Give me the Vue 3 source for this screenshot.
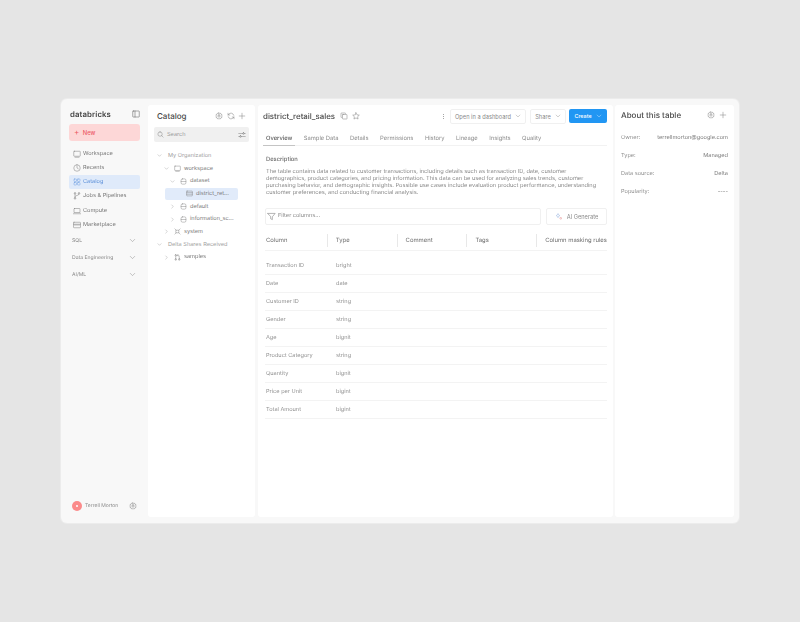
<script setup>
const nav = [
  { label: 'Workspace', icon: 'monitor' },
  { label: 'Recents', icon: 'clock' },
  { label: 'Catalog', icon: 'grid', active: true },
  { label: 'Jobs & Pipelines', icon: 'branch' },
  { label: 'Compute', icon: 'laptop' },
  { label: 'Marketplace', icon: 'store' }
]
const sections = ['SQL', 'Data Engineering', 'AI/ML']
const tree = [
  { label: 'My Organization', depth: 0, arrow: 'down', heading: true },
  { label: 'workspace', depth: 1, arrow: 'down', icon: 'monitor' },
  { label: 'dataset', depth: 2, arrow: 'down', icon: 'db' },
  { label: 'district_ret...', depth: 3, icon: 'table', selected: true },
  { label: 'default', depth: 2, arrow: 'right', icon: 'db' },
  { label: 'information_sc...', depth: 2, arrow: 'right', icon: 'db' },
  { label: 'system', depth: 1, arrow: 'right', icon: 'system' },
  { label: 'Delta Shares Received', depth: 0, arrow: 'down', heading: true },
  { label: 'samples', depth: 1, arrow: 'right', icon: 'share' }
]
const tabs = ['Overview', 'Sample Data', 'Details', 'Permissions', 'History', 'Lineage', 'Insights', 'Quality']
const heads = ['Column', 'Type', 'Comment', 'Tags', 'Column masking rules']
const rows = [
  ['Transaction ID', 'bright'], ['Date', 'date'], ['Customer ID', 'string'], ['Gender', 'string'],
  ['Age', 'bignit'], ['Product Category', 'string'], ['Quantity', 'bignit'], ['Price per Unit', 'bigint'], ['Total Amount', 'bigint']
]
const about = [
  ['Owner:', 'terrellmorton@google.com'], ['Type:', 'Managed'], ['Data source:', 'Delta'], ['Popularity:', '----']
]
const paths = {
  monitor: 'M2.500 2.500h11a1 1 0 0 1 1 1v8a1 1 0 0 1-1 1h-11a1 1 0 0 1-1-1v-8a1 1 0 0 1 1-1zM4 14.500h8',
  clock: 'M8 1.500a6.500 6.500 0 1 0 0 13a6.500 6.500 0 1 0 0-13zM8 4.500V8l2.500 1.500',
  grid: 'M3 2h3a1 1 0 0 1 1 1v3a1 1 0 0 1-1 1H3a1 1 0 0 1-1-1V3a1 1 0 0 1 1-1zM10 2h3a1 1 0 0 1 1 1v3a1 1 0 0 1-1 1h-3a1 1 0 0 1-1-1V3a1 1 0 0 1 1-1zM3 9h3a1 1 0 0 1 1 1v3a1 1 0 0 1-1 1H3a1 1 0 0 1-1-1v-3a1 1 0 0 1 1-1zM10 9h3a1 1 0 0 1 1 1v3a1 1 0 0 1-1 1h-3a1 1 0 0 1-1-1v-3a1 1 0 0 1 1-1z',
  branch: 'M4 4.500v7M4 9c0-3 8-1 8-4.500M4 1.500a1.500 1.500 0 1 0 0 3a1.500 1.500 0 1 0 0-3zM4 11.500a1.500 1.500 0 1 0 0 3a1.500 1.500 0 1 0 0-3zM12 1.500a1.500 1.500 0 1 0 0 3a1.500 1.500 0 1 0 0-3z',
  laptop: 'M3 3h10a1 1 0 0 1 1 1v7H2V4a1 1 0 0 1 1-1zM.800 13.500h14.400',
  store: 'M2 2.500h12a1 1 0 0 1 1 1v9a1 1 0 0 1-1 1H2a1 1 0 0 1-1-1v-9a1 1 0 0 1 1-1zM1 6.500h14M4 6.500V9M8 6.500V9M12 6.500V9',
  db: 'M5.500 2h5a3 3 0 0 1 3 3v6a3 3 0 0 1-3 3h-5a3 3 0 0 1-3-3V5a3 3 0 0 1 3-3zM2.500 8h11',
  table: 'M2.500 2.500h11a1 1 0 0 1 1 1v9a1 1 0 0 1-1 1h-11a1 1 0 0 1-1-1v-9a1 1 0 0 1 1-1zM1.500 6h13M1.500 9.700h13',
  system: 'M5 5h6v6H5zM5 5L2 2M11 5l3-3M5 11l-3 3M11 11l3 3',
  share: 'M4 5v6M12 11V5c0-1.500-1-2-2-2H7.500M9 1L7 3l2 2M4 1.500a1.700 1.700 0 1 0 0 3.400a1.700 1.700 0 1 0 0-3.400zM4 11a1.700 1.700 0 1 0 0 3.400a1.700 1.700 0 1 0 0-3.400zM12 11a1.700 1.700 0 1 0 0 3.400a1.700 1.700 0 1 0 0-3.400z',
  gear: 'M8 1.500l1.300 1.400 1.900-.300.700 1.800 1.800.700-.300 1.900L14.500 8l-1.100 1 .300 1.900-1.800.700-.700 1.800-1.900-.300L8 14.500l-1.300-1.400-1.900.300-.700-1.800-1.800-.700.300-1.900L1.500 8l1.100-1-.300-1.900 1.800-.700.700-1.800 1.900.300zM8 5.700a2.300 2.300 0 1 0 0 4.600a2.300 2.300 0 1 0 0-4.600z',
  sync: 'M13.500 6.500A5.700 5.700 0 0 0 3.500 4.500L2 6M2.500 9.500a5.700 5.700 0 0 0 10 2L14 10M2 2.500V6h3.500M14 13.500V10h-3.500',
  plus: 'M8 2.500v11M2.500 8h11',
  down: 'M3 5.500l5 5 5-5',
  right: 'M5.500 3l5 5-5 5',
  search: 'M7 2a5 5 0 1 0 0 10a5 5 0 1 0 0-10zM10.700 10.700L14 14',
  sliders: 'M1.500 5h8M12.500 5h2M1.500 11h2M6.500 11h8M11 3.300a1.700 1.700 0 1 0 0 3.400a1.700 1.700 0 1 0 0-3.400zM5 9.300a1.700 1.700 0 1 0 0 3.400a1.700 1.700 0 1 0 0-3.400z',
  panel: 'M2.500 2h11a1 1 0 0 1 1 1v10a1 1 0 0 1-1 1h-11a1 1 0 0 1-1-1V3a1 1 0 0 1 1-1zM6 2v12',
  copy: 'M6 5h7a1 1 0 0 1 1 1v7a1 1 0 0 1-1 1H6a1 1 0 0 1-1-1V6a1 1 0 0 1 1-1zM3 11H2.800A.800.800 0 0 1 2 10.200V3a1 1 0 0 1 1-1h7.200a.800.800 0 0 1 .800.800V3',
  star: 'M8 1.500l2 4.200 4.600.600-3.400 3.200.900 4.600L8 11.800l-4.100 2.300.900-4.600L1.400 6.300 6 5.700z',
  filter: 'M1.500 2.500h13L9.500 8.500v5l-3-1.500V8.500z'
}
</script>

<template>
  <div class="page">
    <div class="window">
      <aside class="sidebar">
        <div class="brand">
          <span class="logo">databricks</span>
          <svg class="ico ico-panel" viewBox="0 0 16 16"><path :d="paths.panel" /></svg>
        </div>
        <button class="new"><span class="new-plus">+</span> New</button>
        <nav class="nav">
          <div v-for="n in nav" :key="n.label" class="nav-item" :class="{ active: n.active }">
            <svg class="ico ico-nav" viewBox="0 0 16 16"><path :d="paths[n.icon]" /></svg>
            <span>{{ n.label }}</span>
          </div>
        </nav>
        <div class="sections">
          <div v-for="s in sections" :key="s" class="section">
            <span>{{ s }}</span>
            <svg class="ico ico-chev" viewBox="0 0 16 16"><path :d="paths.down" /></svg>
          </div>
        </div>
        <div class="user">
          <span class="avatar"><i></i></span>
          <span class="user-name">Terrell Morton</span>
          <svg class="ico ico-gear-user" viewBox="0 0 16 16"><path :d="paths.gear" /></svg>
        </div>
      </aside>

      <section class="panel catalog">
        <header class="cat-head">
          <h2 class="title">Catalog</h2>
          <div class="head-icons">
            <svg class="ico ico-head" viewBox="0 0 16 16"><path :d="paths.gear" /></svg>
            <svg class="ico ico-head" viewBox="0 0 16 16"><path :d="paths.sync" /></svg>
            <svg class="ico ico-head" viewBox="0 0 16 16"><path :d="paths.plus" /></svg>
          </div>
        </header>
        <div class="search">
          <svg class="ico ico-search" viewBox="0 0 16 16"><path :d="paths.search" /></svg>
          <span>Search</span>
          <svg class="ico ico-sliders" viewBox="0 0 16 16"><path :d="paths.sliders" /></svg>
        </div>
        <div class="tree">
          <div
            v-for="t in tree"
            :key="t.label"
            class="tree-row"
            :class="[`depth-${t.depth}`, { selected: t.selected, heading: t.heading }]"
          >
            <svg v-if="t.arrow" class="ico ico-arrow" viewBox="0 0 16 16"><path :d="paths[t.arrow]" /></svg>
            <svg v-if="t.icon" class="ico ico-tree" viewBox="0 0 16 16"><path :d="paths[t.icon]" /></svg>
            <span>{{ t.label }}</span>
          </div>
        </div>
      </section>

      <main class="panel main">
        <header class="main-head">
          <h1 class="title table-name">district_retail_sales</h1>
          <svg class="ico ico-title" viewBox="0 0 16 16"><path :d="paths.copy" /></svg>
          <svg class="ico ico-title" viewBox="0 0 16 16"><path :d="paths.star" /></svg>
          <span class="kebab"><i></i><i></i><i></i></span>
          <button class="btn btn-dash">Open in a dashboard
            <svg class="ico ico-btn" viewBox="0 0 16 16"><path :d="paths.down" /></svg>
          </button>
          <button class="btn btn-share">Share
            <svg class="ico ico-btn" viewBox="0 0 16 16"><path :d="paths.down" /></svg>
          </button>
          <button class="btn-create">Create
            <svg class="ico ico-btn" viewBox="0 0 16 16"><path :d="paths.down" /></svg>
          </button>
        </header>
        <div class="tabs">
          <span v-for="(t, i) in tabs" :key="t" class="tab" :class="{ on: i === 0 }">{{ t }}</span>
        </div>
        <div class="desc">
          <h3>Description</h3>
          <p>The table contains data related to customer transactions, including details such as transaction ID, date, customer demographics, product categories, and pricing information. This data can be used for analyzing sales trends, customer purchasing behavior, and demographic insights. Possible use cases include evaluation product performance, understanding customer preferences, and conducting financial analysis.</p>
        </div>
        <div class="filter-row">
          <div class="filter">
            <svg class="ico ico-filter" viewBox="0 0 16 16"><path :d="paths.filter" /></svg>
            <span>Filter columns...</span>
          </div>
          <button class="ai">
            <svg class="ai-ico" viewBox="0 0 16 16">
              <path d="M6 3l1.200 3L10 7.200 7.200 8.500 6 11.500 4.800 8.500 2 7.200 4.800 6z" />
              <path class="ai-b" d="M11.500 10l.700 1.800 1.800.700-1.800.700-.700 1.800-.700-1.800-1.800-.700 1.800-.700z" />
            </svg>
            AI Generate
          </button>
        </div>
        <div class="thead">
          <div v-for="h in heads" :key="h" class="th">{{ h }}</div>
        </div>
        <div class="tbody">
          <div v-for="r in rows" :key="r[0]" class="tr">
            <span class="td">{{ r[0] }}</span>
            <span class="td">{{ r[1] }}</span>
          </div>
        </div>
      </main>

      <section class="panel about">
        <header class="about-head">
          <h2 class="title">About this table</h2>
          <div class="head-icons">
            <svg class="ico ico-head" viewBox="0 0 16 16"><path :d="paths.gear" /></svg>
            <svg class="ico ico-head" viewBox="0 0 16 16"><path :d="paths.plus" /></svg>
          </div>
        </header>
        <dl class="facts">
          <div v-for="a in about" :key="a[0]" class="fact">
            <dt>{{ a[0] }}</dt>
            <dd>{{ a[1] }}</dd>
          </div>
        </dl>
      </section>
    </div>
  </div>
</template>

<style>
html, body { margin: 0; background: #e5e5e5; }
</style>

<style scoped>
.page {
  width: 800px;
  height: 622px;
  box-sizing: border-box;
  padding: 99px 61px;
  background: #e5e5e5;
  font-family: Inter, "Liberation Sans", sans-serif;
  color: #777;
  font-size: 5.600px;
  text-rendering: geometricPrecision;
  -webkit-font-smoothing: antialiased;
}
.window {
  display: flex;
  height: 424px;
  background: #f8f8f8;
  border-radius: 6px;
  box-sizing: border-box;
  padding: 6px 5px 6px 0;
  box-shadow: 0 0 0 1px #ececec;
  filter: blur(.25px);
}
.ico { fill: none; stroke: #7c7c7c; stroke-width: 1; flex: none; stroke-linecap: round; stroke-linejoin: round; }
.sidebar { width: 87px; flex: none; display: flex; flex-direction: column; padding: 0 8px; box-sizing: border-box; }
.brand { display: flex; justify-content: space-between; align-items: center; height: 17px; margin-bottom: 2px; padding-left: 1px; }
.logo { font-size: 7.800px; font-weight: 600; color: #444; letter-spacing: .1px; }
.ico-panel { width: 8px; height: 8px; stroke: #555; }
.new {
  height: 17px; border: 0; border-radius: 3px; background: #fdd7d7; color: #ec5a64;
  text-align: left; padding: 0 0 2px 5px; font: 500 5.800px Inter, sans-serif; display: block;
}
.new-plus { font-size: 8px; margin-right: 2px; font-weight: 400; }
.nav { display: flex; flex-direction: column; margin-top: 5.500px; }
.nav-item { height: 14.200px; display: flex; align-items: center; gap: 2.500px; padding-left: 3.500px; padding-top: .5px; box-sizing: border-box; border-radius: 2px; }
.nav-item.active { background: #dfeafa; color: #5b8fd8; }
.nav-item.active .ico { stroke: #6e9fe0; }
.ico-nav { width: 8px; height: 8px; }
.sections { display: flex; flex-direction: column; margin-top: .5px; }
.section { height: 17px; display: flex; justify-content: space-between; align-items: center; padding: 0 4px 0 3px; font-size: 5.100px; color: #888; }
.ico-chev { width: 7px; height: 7px; }
.user { margin-top: auto; display: flex; align-items: center; margin-bottom: 6px; padding-left: 3px; }
.avatar { width: 10px; height: 10px; border-radius: 50%; background: #fb8a8a; display: flex; align-items: center; justify-content: center; }
.avatar i { width: 2px; height: 2px; background: #fff; border-radius: 50%; }
.user-name { margin-left: 3px; font-size: 5px; color: #8a8a8a; }
.ico-gear-user { width: 8px; height: 8px; margin-left: auto; margin-right: 3px; }

.panel { background: #fff; border-radius: 3px; }
.title { margin: 0; font-weight: 500; color: #4a4a4a; font-size: 8px; }
.catalog { width: 107px; flex: none; margin-right: 3px; padding: 0 6px; box-sizing: border-box; }
.cat-head { display: flex; justify-content: space-between; align-items: center; height: 21px; padding: 0 3px; }
.head-icons { display: flex; gap: 3.500px; align-items: center; }
.ico-head { width: 8px; height: 8px; }
.search {
  height: 15px; background: #f0f0f0; border-radius: 2px; display: flex; align-items: center;
  gap: 3px; padding: 0 3px; color: #9a9a9a; margin-top: 1px;
}
.ico-search { width: 7px; height: 7px; }
.ico-sliders { width: 8px; height: 8px; margin-left: auto; }
.tree { margin-top: 7.500px; display: flex; flex-direction: column; }
.tree-row { height: 12.700px; display: flex; align-items: center; gap: 3.500px; color: #7a7a7a; white-space: nowrap; }
.tree-row.heading { color: #a0a0a0; gap: 6px; }
.depth-0 { padding-left: 3px; }
.depth-1 { padding-left: 10px; }
.depth-2 { padding-left: 16px; }
.tree-row .ico-arrow { margin-right: 1px; }
.tree-row.heading .ico-arrow { margin-right: 0; }
.depth-3 { margin-left: 11px; width: 73px; box-sizing: border-box; border-radius: 2px; }
.tree-row.selected { background: #e1ebfa; padding-left: 20.500px; }
.ico-arrow { width: 5px; height: 5px; }
.ico-tree { width: 7px; height: 7px; }

.main { width: 355px; flex: none; margin-right: 2px; padding: 0 6px; box-sizing: border-box; }
.main-head { display: flex; align-items: center; height: 20px; padding-top: 1px; margin-left: -1px; }
.table-name { margin-right: 5px; font-size: 7.900px; }
.ico-title { width: 8px; height: 8px; margin-right: 3.500px; }
.kebab { margin-left: auto; margin-right: 6px; display: flex; flex-direction: column; gap: 1px; }
.kebab i { width: 1px; height: 1px; border-radius: 50%; background: #888; }
.btn {
  height: 15px; background: #fff; border: 1px solid #f0f0f0; border-radius: 2px; color: #8a8a8a;
  font: 400 5.700px Inter, sans-serif; display: flex; align-items: center; gap: 4px; padding: 0 4px;
  box-sizing: border-box; white-space: nowrap;
}
.btn-dash { width: 76px; justify-content: center; margin-right: 4px; }
.btn-share { width: 36px; justify-content: center; margin-right: 3px; }
.btn-create {
  width: 38px; height: 14px; background: #2196f3; color: #fff; border: 0; border-radius: 2px;
  font: 500 5.400px Inter, sans-serif; display: flex; align-items: center; justify-content: center; gap: 4px;
}
.btn-create .ico { stroke: #fff; }
.ico-btn { width: 6px; height: 6px; }
.tabs { display: flex; gap: 11.500px; height: 13px; align-items: center; border-bottom: 1px solid #f2f2f2; padding-left: 2px; margin-top: 6px; }
.tab { color: #8a8a8a; height: 13px; line-height: 13px; box-sizing: border-box; font-size: 5.800px; }
.tab.on { color: #555; font-weight: 500; box-shadow: 0 1px 0 #c4c4c4; padding: 0 3px; margin: 0 -3px; }
.desc { padding: 0 2px; margin-top: 10px; }
.desc h3 { margin: 0 0 6px; font-size: 5.800px; font-weight: 500; color: #6a6a6a; line-height: 7px; }
.desc p { margin: 0; line-height: 7px; font-size: 5.650px; color: #8a8a8a; width: 331px; }
.filter-row { display: flex; gap: 5px; margin-top: 10.500px; margin-left: 1px; }
.filter { flex: 1; height: 17px; border: 1px solid #f0f0f0; border-radius: 2px; display: flex; align-items: center; gap: 2px; padding-left: 1px; box-sizing: border-box; color: #8a8a8a; }
.ico-filter { width: 9px; height: 9px; }
.ai { width: 61px; height: 17px; border: 1px solid #f0f0f0; background: #fff; border-radius: 2px; box-sizing: border-box; display: flex; align-items: center; justify-content: center; gap: 4px; color: #8a8a8a; font: 400 5.700px Inter, sans-serif; }
.ai-ico { width: 8px; height: 8px; fill: none; stroke: #9cb6e0; stroke-width: 1; }
.ai-b { stroke: #e9a0a0; }
.thead { display: flex; margin-top: 9px; height: 14.500px; align-items: center; border-bottom: 1px solid #f3f3f3; padding-bottom: 2px; margin-left: 1px; }
.th { width: 70px; height: 13px; line-height: 13px; box-sizing: border-box; border-right: 1px solid #e8e8e8; color: #6c6c6c; font-size: 5.900px; white-space: nowrap; padding-left: 8px; }
.th:last-child { border-right: 0; }
.th:first-child { width: 63px; padding-left: 1px; }
.tbody { margin-top: 6px; margin-left: 1px; }
.tr { height: 18.050px; display: flex; align-items: center; border-bottom: 1px solid #f3f3f3; box-sizing: border-box; padding-top: 1px; color: #929292; }
.td { width: 70px; padding-left: 1px; box-sizing: border-box; }

.about { flex: 1; padding: 0 6px; box-sizing: border-box; }
.about-head { display: flex; justify-content: space-between; align-items: center; height: 20px; padding-right: 1px; }
.about-head .head-icons { gap: 4px; }
.facts { margin: 3.500px 0 0; }
.fact { display: flex; justify-content: space-between; height: 18px; align-items: center; }
.fact dt { color: #8f8f8f; }
.fact dd { margin: 0; color: #7c7c7c; }
</style>
